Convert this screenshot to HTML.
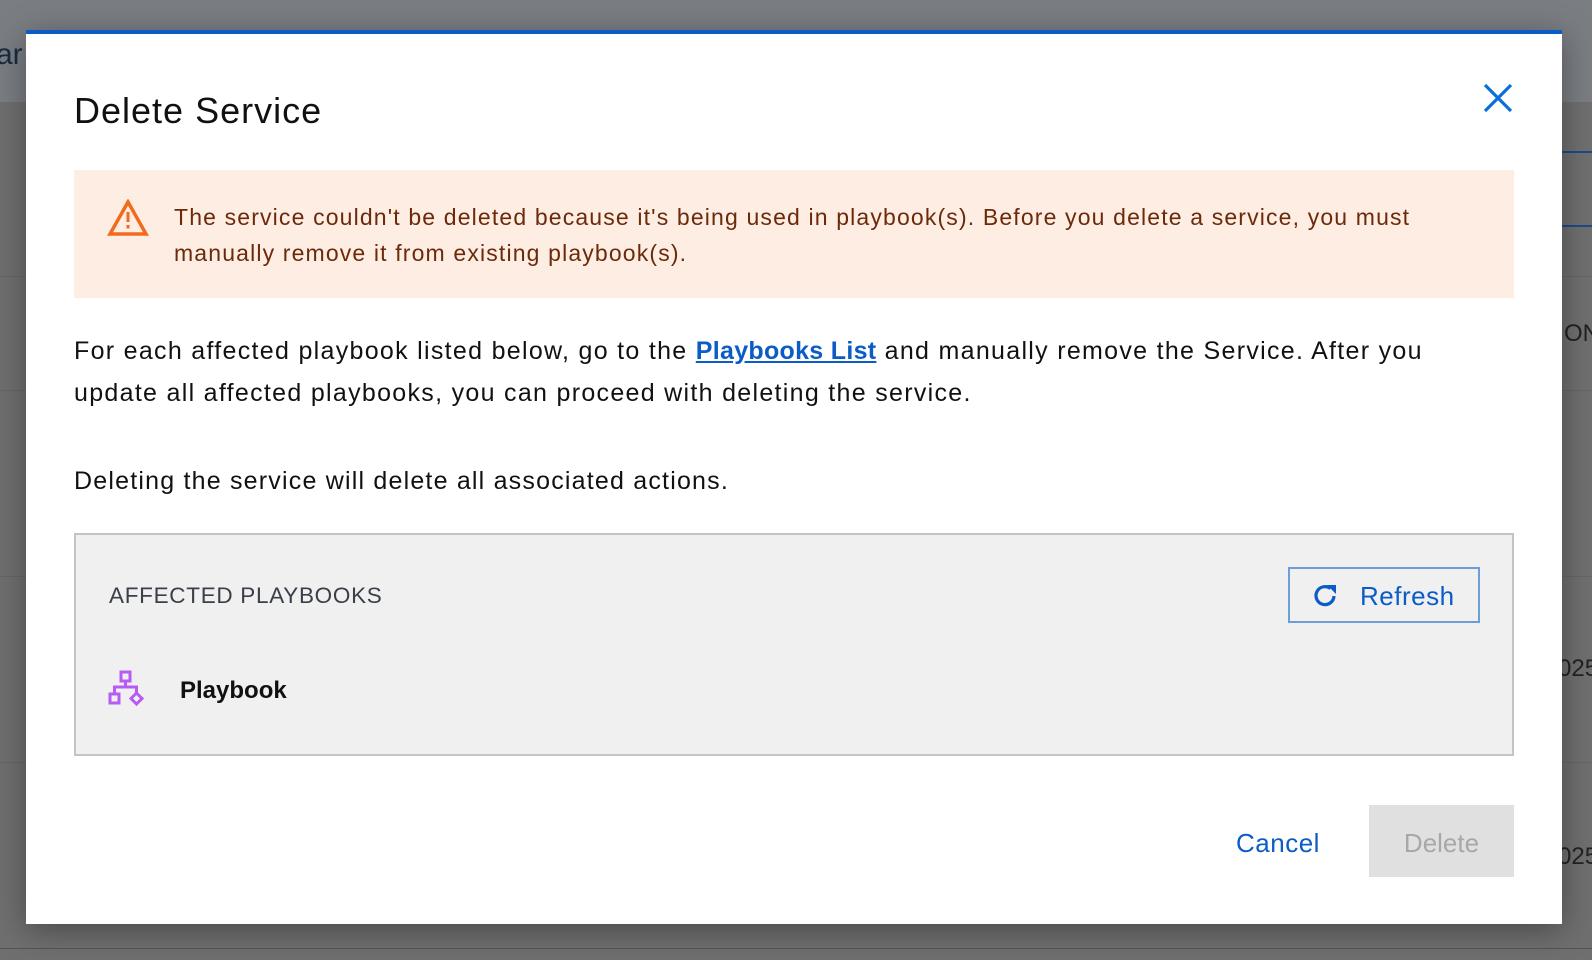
<!DOCTYPE html>
<html><head><meta charset="utf-8"><style>
*{margin:0;padding:0;box-sizing:border-box}
body{width:1592px;height:960px;overflow:hidden;background:#707070;font-family:"Liberation Sans",sans-serif;position:relative}
.a{position:absolute}
</style></head><body>
<div class="a" style="left:0;top:0;width:1592px;height:102px;background:#7a7d82"></div>
<div class="a" style="left:0;top:102px;width:1592px;height:858px;background:#6f6f6f"></div>
<div class="a" style="left:0;top:276px;width:1592px;height:1px;background:#666"></div>
<div class="a" style="left:0;top:390px;width:1592px;height:1px;background:#666"></div>
<div class="a" style="left:0;top:576px;width:1592px;height:1px;background:#666"></div>
<div class="a" style="left:0;top:762px;width:1592px;height:1px;background:#666"></div>
<div class="a" style="left:0;top:948px;width:1592px;height:1px;background:#555"></div>
<div class="a" style="left:1562px;top:151px;width:30px;height:2px;background:#1e4a8a"></div>
<div class="a" style="left:1562px;top:225px;width:30px;height:2px;background:#1e4a8a"></div>
<div class="a" style="left:-4px;top:38px;font-size:30px;color:#1a2a40">ar</div>
<div class="a" style="left:1564px;top:320px;font-size:24px;color:#222">ON</div>
<div class="a" style="left:1558px;top:655px;font-size:24px;color:#222">025</div>
<div class="a" style="left:1558px;top:843px;font-size:24px;color:#222">025</div>

<div class="a" style="left:26px;top:30px;width:1536px;height:894px;background:#fff;border-top:4px solid #0b5cc7;box-shadow:0 6px 30px rgba(0,0,0,.35)"></div>
<div class="a" style="left:74px;top:90px;font-size:36px;color:#111;letter-spacing:1px">Delete Service</div>
<svg class="a" style="left:1482px;top:82px" width="32" height="32" viewBox="0 0 32 32"><path d="M3 3L29 29M29 3L3 29" stroke="#0a6fdc" stroke-width="3.2" fill="none"/></svg>

<div class="a" style="left:74px;top:170px;width:1440px;height:128px;background:#feede3"></div>
<svg class="a" style="left:107px;top:199px" width="42" height="38" viewBox="0 0 42 38"><path d="M21 3L39 35H3Z" stroke="#f26b1d" stroke-width="3.5" fill="none" stroke-linejoin="miter"/><rect x="19.5" y="13" width="3" height="10" fill="#f26b1d"/><rect x="19.5" y="26" width="3" height="3.5" fill="#f26b1d"/></svg>
<div class="a" style="left:174px;top:199px;font-size:23px;line-height:36px;color:#6b2a0a;width:1320px;letter-spacing:1.15px">The service couldn't be deleted because it's being used in playbook(s). Before you delete a service, you must<br>manually remove it from existing playbook(s).</div>

<div class="a" style="left:74px;top:330px;font-size:25px;line-height:42px;color:#111;width:1460px;letter-spacing:1.3px">For each affected playbook listed below, go to the <span style="color:#0b5cc7;font-weight:bold;text-decoration:underline;letter-spacing:0.3px">Playbooks List</span> and manually remove the Service. After you<br>update all affected playbooks, you can proceed with deleting the service.</div>
<div class="a" style="left:74px;top:467px;font-size:25px;color:#111;letter-spacing:1.2px">Deleting the service will delete all associated actions.</div>

<div class="a" style="left:74px;top:533px;width:1440px;height:223px;background:#f0f0f0;border:2px solid #c4c4c4"></div>
<div class="a" style="left:109px;top:583px;font-size:22.5px;color:#3a3f48;letter-spacing:.7px">AFFECTED PLAYBOOKS</div>
<div class="a" style="left:1288px;top:567px;width:192px;height:56px;border:2px solid #6a9fd8"></div>
<svg class="a" style="left:1312px;top:582px" width="28" height="28" viewBox="0 0 28 28"><path d="M22 14A9 9 0 1 1 18.5 6.5" stroke="#0b5cc7" stroke-width="3.2" fill="none"/><path d="M15 3L24 3L24 12Z" fill="#0b5cc7"/></svg>
<div class="a" style="left:1360px;top:581px;font-size:26px;color:#0b5cc7;letter-spacing:.5px">Refresh</div>
<svg class="a" style="left:108px;top:670px" width="42" height="40" viewBox="0 0 42 40"><g stroke="#b65cf5" stroke-width="3" fill="none"><rect x="13" y="2" width="9" height="9"/><path d="M17.5 11V17M6.5 24V17H28.5V23"/><rect x="2" y="24" width="9" height="9"/><path d="M28.5 23L34 28.5L28.5 34L23 28.5Z"/></g></svg>
<div class="a" style="left:180px;top:677px;font-size:24px;font-weight:bold;color:#111">Playbook</div>

<div class="a" style="left:1236px;top:828px;font-size:26px;color:#0b5cc7;letter-spacing:.5px">Cancel</div>
<div class="a" style="left:1369px;top:805px;width:145px;height:72px;background:#e0e0e0"></div>
<div class="a" style="left:1369px;top:828px;width:145px;text-align:center;font-size:26px;color:#a8a8a8">Delete</div>
</body></html>
